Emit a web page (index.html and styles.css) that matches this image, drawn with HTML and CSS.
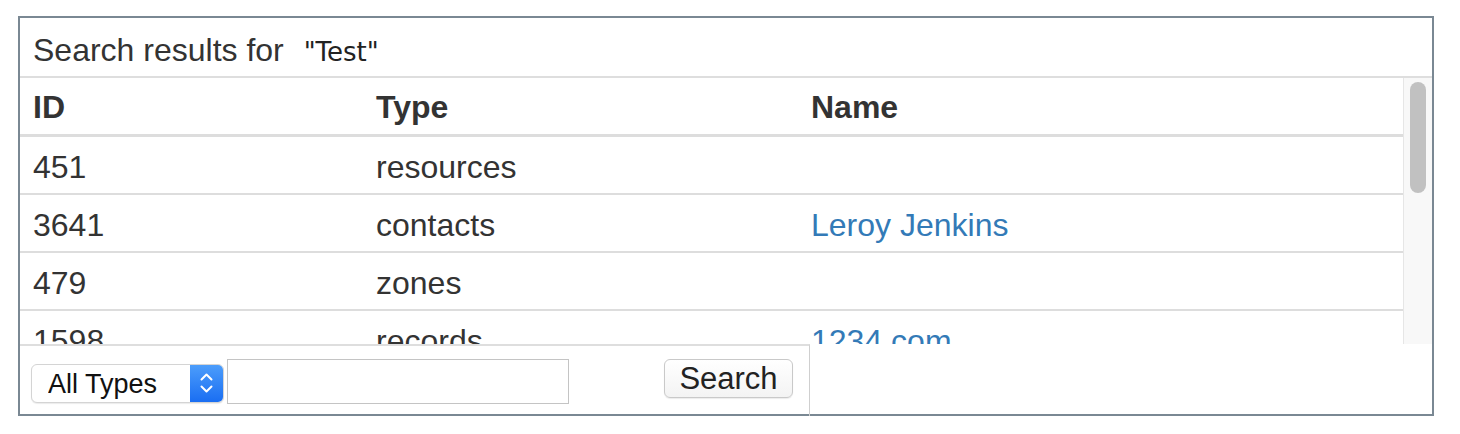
FILE: index.html
```html
<!DOCTYPE html>
<html lang="en">
<head>
<meta charset="utf-8">
<title>Search results</title>
<link rel="stylesheet" href="styles.css">
</head>
<body>
<div class="panel">
  <div class="title">Search results for <span class="query">"Test"</span></div>
  <div class="scroll">
    <div class="table-wrap">
      <table class="results">
        <colgroup>
          <col class="c-id"><col class="c-type"><col class="c-name">
        </colgroup>
        <thead>
          <tr><th>ID</th><th>Type</th><th>Name</th></tr>
        </thead>
        <tbody>
          <tr><td>451</td><td>resources</td><td></td></tr>
          <tr><td>3641</td><td>contacts</td><td><a href="#">Leroy Jenkins</a></td></tr>
          <tr><td>479</td><td>zones</td><td></td></tr>
          <tr><td>1598</td><td>records</td><td><a href="#">1234.com</a></td></tr>
        </tbody>
      </table>
    </div>
    <div class="scrollbar"><div class="thumb"></div></div>
  </div>
  <div class="footer">
    <form class="search-form">
      <div class="select">
        <select class="select-native">
          <option>All Types</option>
          <option>resources</option>
          <option>contacts</option>
          <option>zones</option>
          <option>records</option>
        </select>
        <span class="select-arrow">
          <svg width="33" height="39" viewBox="0 0 33 39"><path d="M11.5 14.5 L16.5 9.5 L21.5 14.5 M11.5 21.5 L16.5 26.5 L21.5 21.5" fill="none" stroke="#fff" stroke-width="2" stroke-linecap="round" stroke-linejoin="round"/></svg>
        </span>
      </div>
      <input class="query-input" type="text">
      <button class="search-btn" type="button">Search</button>
    </form>
  </div>
</div>
</body>
</html>
```

FILE: styles.css
```css
html, body {
  margin: 0;
  padding: 0;
  background: #fff;
}

body {
  font-family: "Liberation Sans", Arial, Helvetica, sans-serif;
  color: #333;
}

.panel {
  box-sizing: border-box;
  margin: 16px 0 0 18px;
  width: 1416px;
  height: 400px;
  border: 2px solid #7a8893;
  display: flex;
  flex-direction: column;
}

.title {
  flex: none;
  height: 60px;
  box-sizing: border-box;
  padding: 13px 0 0 13px;
  font-size: 32px;
  line-height: 38px;
  color: #333;
  border-bottom: 2px solid #dedede;
  white-space: pre;
}

.query {
  font-family: "DejaVu Sans", Verdana, sans-serif;
  font-size: 26px;
  margin-left: 11px;
  color: #222;
}

.scroll {
  flex: none;
  height: 266px;
  display: flex;
}

.table-wrap {
  flex: 1;
  overflow: hidden;
}

.scrollbar {
  flex: none;
  box-sizing: border-box;
  width: 29px;
  background: #f8f8f8;
  border-left: 1px solid #e6e6e6;
  padding: 4px 6px 0 6px;
}

.thumb {
  height: 111px;
  border-radius: 8px;
  background: #c1c1c1;
}

.results {
  width: 100%;
  border-collapse: collapse;
  table-layout: fixed;
  font-size: 32px;
}

.c-id { width: 343px; }
.c-type { width: 435px; }

.results th,
.results td {
  text-align: left;
  padding: 0 13px;
  vertical-align: middle;
  white-space: nowrap;
  line-height: 36px;
}

.results th {
  height: 54px;
  padding-top: 2px;
  font-weight: bold;
  border-bottom: 3px solid #dddddd;
}

.results td {
  height: 52px;
  padding-top: 4px;
  border-bottom: 2px solid #dddddd;
}

.results a {
  color: #337ab7;
  text-decoration: none;
}

.footer {
  flex: 1;
}

.search-form {
  box-sizing: border-box;
  width: 790px;
  height: 76px;
  border-top: 2px solid #dedede;
  border-right: 1px solid #cfcfcf;
  margin: 0;
  padding: 13px 0 0 11px;
  display: flex;
  align-items: flex-start;
}

.select {
  box-sizing: border-box;
  margin-top: 5px;
  width: 193px;
  height: 39px;
  border: 1px solid #d4d4d4;
  border-radius: 6px;
  background: #fff;
  box-shadow: 0 1px 1px rgba(0, 0, 0, 0.08);
  display: flex;
  overflow: hidden;
}

.select-native {
  appearance: none;
  -webkit-appearance: none;
  border: 0;
  background: transparent;
  flex: 1;
  min-width: 0;
  padding: 0 0 0 16px;
  margin: 0;
  font-family: "Liberation Sans", Arial, sans-serif;
  font-size: 27px;
  color: #111;
  outline: none;
}

.select-arrow {
  width: 33px;
  flex: none;
  background: linear-gradient(#4c9dfb, #1a6ef2);
  display: flex;
}

.query-input {
  box-sizing: border-box;
  width: 342px;
  height: 45px;
  margin: 0 0 0 3px;
  border: 1px solid #c4c4c4;
  font-size: 26px;
  padding: 0 6px;
}

.search-btn {
  box-sizing: border-box;
  width: 129px;
  height: 39px;
  margin-left: 95px;
  border: 1px solid #c9c9c9;
  border-radius: 6px;
  background: linear-gradient(#ffffff, #f3f3f3);
  box-shadow: 0 1px 1px rgba(0, 0, 0, 0.08);
  font-family: "Liberation Sans", Arial, sans-serif;
  font-size: 31px;
  color: #222;
  padding: 0;
  line-height: 37px;
}
```
